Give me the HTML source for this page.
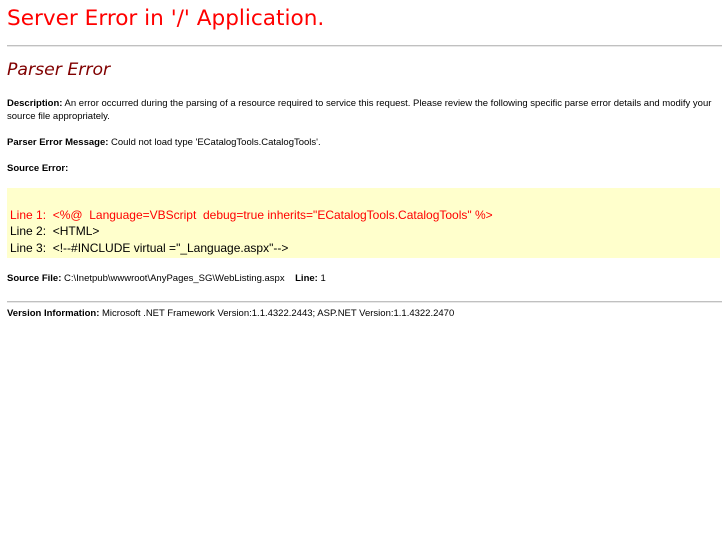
<!DOCTYPE html>
<html><head><style>
body{margin:0;background:#fff;width:727px;height:545px;position:relative;font-family:"Liberation Sans",Arial,sans-serif;}
.a{position:absolute;left:7px;white-space:nowrap;}
h1{position:absolute;left:7px;top:6px;margin:0;font:normal 21.6px "DejaVu Sans",Verdana,sans-serif;color:#f00;}
h2{position:absolute;left:7px;top:60px;margin:0;font:italic 17.3px "DejaVu Sans",Verdana,sans-serif;color:#800000}
.hr{position:absolute;left:7px;width:715px;height:1px;background:#c0c0c0;border-bottom:1px solid #e8e8e8}
.s{font-size:9.5px;color:#000;line-height:13px}
.box{position:absolute;left:7px;top:188px;width:713px;height:70px;background:#ffffcc}
.c{position:absolute;left:3px;font-size:12px;white-space:pre;}
</style></head><body>
<h1>Server Error in '/' Application.</h1>
<div class="hr" style="top:45px"></div>
<h2>Parser Error</h2>
<div class="a s" style="top:97px;white-space:normal;width:712px"><b>Description:</b> An error occurred during the parsing of a resource required to service this request. Please review the following specific parse error details and modify your source file appropriately.</div>
<div class="a s" style="top:136px"><b>Parser Error Message:</b> Could not load type 'ECatalogTools.CatalogTools'.</div>
<div class="a s" style="top:162px"><b>Source Error:</b></div>
<div class="box">
<div class="c" style="top:20px;color:#f00">Line 1:  &lt;%@  Language=VBScript  debug=true inherits="ECatalogTools.CatalogTools" %&gt;</div>
<div class="c" style="top:36px">Line 2:  &lt;HTML&gt;</div>
<div class="c" style="top:53px">Line 3:  &lt;!--#INCLUDE virtual ="_Language.aspx"--&gt;</div>
</div>
<div class="a s" style="top:272px"><b>Source File:</b> C:\Inetpub\wwwroot\AnyPages_SG\WebListing.aspx &nbsp;&nbsp;&nbsp;<b>Line:</b> 1</div>
<div class="hr" style="top:301px"></div>
<div class="a s" style="top:307px"><b>Version Information:</b> Microsoft .NET Framework Version:1.1.4322.2443; ASP.NET Version:1.1.4322.2470</div>
</body></html>
